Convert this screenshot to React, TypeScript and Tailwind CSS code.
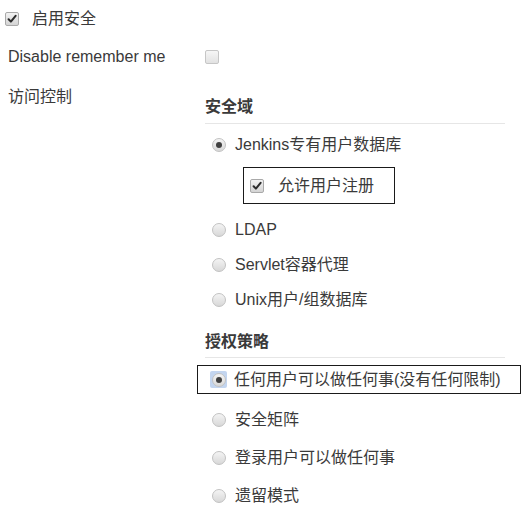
import React from "react";

function Checkbox({ checked = false }: { checked?: boolean }) {
  return (
    <span
      className={
        "flex h-[14px] w-[14px] shrink-0 items-center justify-center rounded-[2px] border " +
        (checked
          ? "border-[#a9a9a9] bg-gradient-to-b from-[#f2f2f2] to-[#d4d4d4]"
          : "border-[#c6c6c6] bg-gradient-to-b from-[#f6f6f6] to-[#e2e2e2]")
      }
    >
      {checked && (
        <svg width="10" height="10" viewBox="0 0 10 10">
          <path d="M1.6 5.2 L3.9 7.6 L8.6 1.8" fill="none" stroke="#2b2b2b" strokeWidth="2" strokeLinecap="round" strokeLinejoin="round" />
        </svg>
      )}
    </span>
  );
}

function Radio({ checked = false }: { checked?: boolean }) {
  return (
    <span className="flex h-[14px] w-[14px] shrink-0 items-center justify-center rounded-full border border-[#c2c2c2] bg-gradient-to-b from-[#f4f4f4] to-[#d8d8d8]">
      {checked && <span className="h-[6px] w-[6px] rounded-full bg-[#404040]" />}
    </span>
  );
}

function RadioRow({ label, checked = false, h = "h-[35px]" }: { label: string; checked?: boolean; h?: string }) {
  return (
    <div className={"flex items-center pl-[7px] " + h}>
      <Radio checked={checked} />
      <span className="ml-[9px] leading-5">{label}</span>
    </div>
  );
}

export default function App() {
  return (
    <div
      className="h-[511px] w-[530px] overflow-hidden bg-white text-[16px] text-[#3a3a3a]"
      style={{ fontFamily: '"Liberation Sans", Arial, "Noto Sans CJK SC", sans-serif' }}
    >
      <div className="flex h-[38px] items-center pl-[5px]">
        <Checkbox checked />
        <span className="ml-[13px] leading-5">启用安全</span>
      </div>

      <div className="grid h-[38px] grid-cols-[205px_1fr] items-center">
        <span className="pl-[8px] leading-5">Disable remember me</span>
        <div className="flex">
          <Checkbox />
        </div>
      </div>

      <div className="grid grid-cols-[205px_1fr]">
        <div className="pl-[8px] pt-[11px] leading-5">访问控制</div>
        <div className="w-[300px]">
          <div className="border-b border-[#e6e6e6] pb-[6px] pt-[21px] font-bold leading-5">安全域</div>

          <RadioRow label="Jenkins专有用户数据库" checked h="h-[42px]" />
          <div className="ml-[38px] mt-[1px] inline-flex h-[37px] items-center border border-[#1a1a1a] pl-[6px] pr-[20px]">
            <Checkbox checked />
            <span className="ml-[14px] leading-5">允许用户注册</span>
          </div>
          <div className="mt-[8px]">
            <RadioRow label="LDAP" />
            <RadioRow label="Servlet容器代理" />
            <RadioRow label="Unix用户/组数据库" />
          </div>

          <div className="mt-[15px] border-b border-[#e6e6e6] pb-[5px] font-bold leading-5">授权策略</div>

          <div className="-ml-[8px] mt-[7px] flex h-[29px] w-[324px] items-center border border-[#1a1a1a] pl-[12px]">
            <span className="flex h-[17px] w-[17px] items-center justify-center rounded-[2px] bg-[#c3d5ef]">
              <Radio checked />
            </span>
            <span className="ml-[7px] leading-5">任何用户可以做任何事(没有任何限制)</span>
          </div>

          <div className="mt-[7px]">
            <RadioRow label="安全矩阵" h="h-[38px]" />
            <RadioRow label="登录用户可以做任何事" h="h-[38px]" />
            <RadioRow label="遗留模式" h="h-[38px]" />
          </div>
        </div>
      </div>
    </div>
  );
}
